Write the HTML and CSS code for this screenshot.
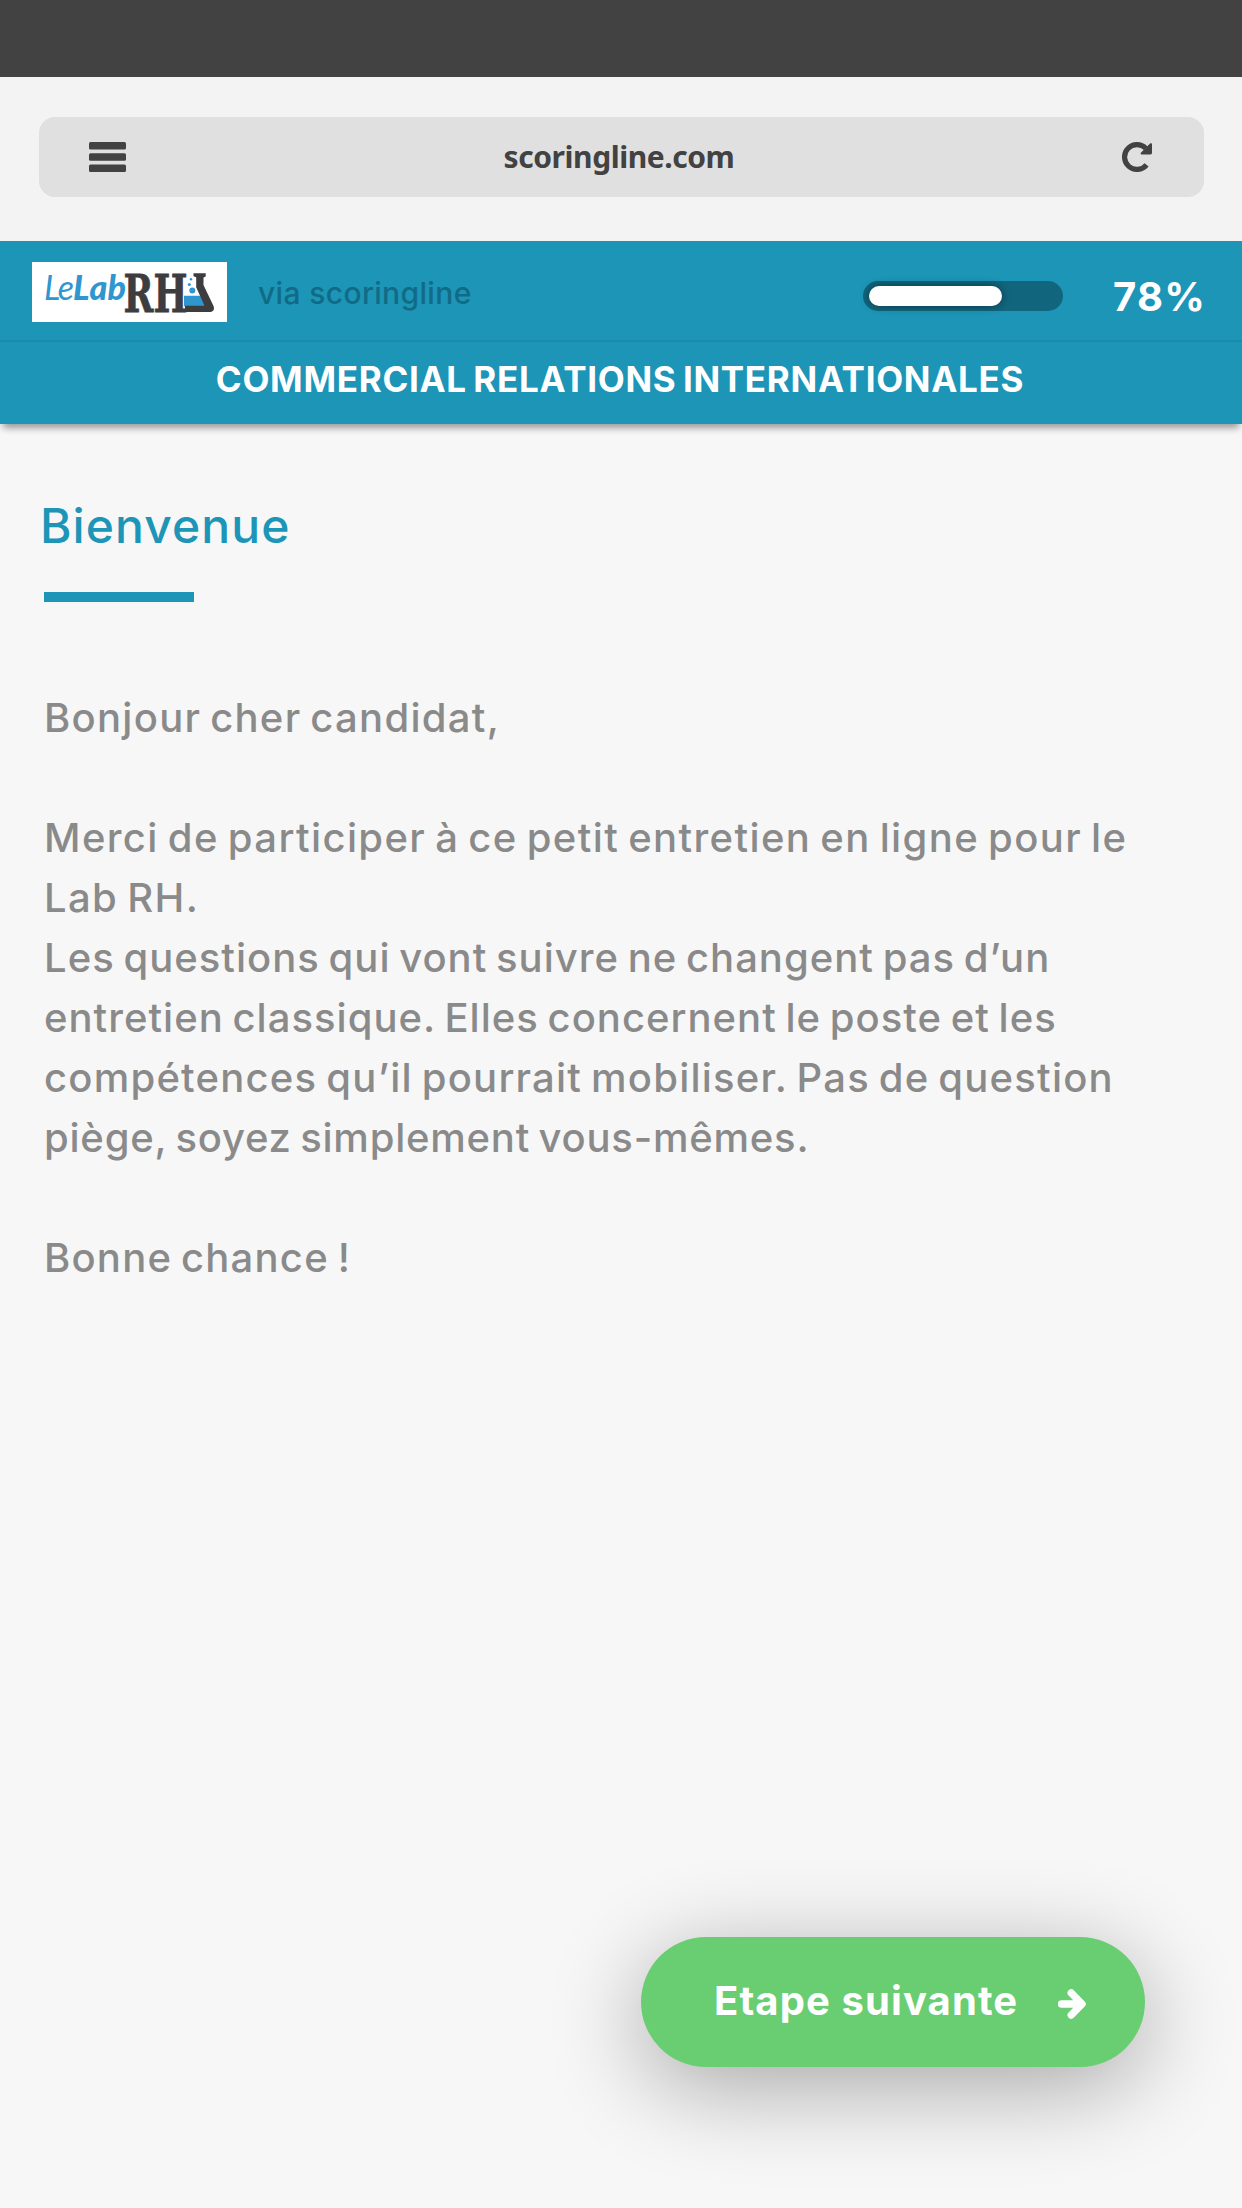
FILE: index.html
```html
<!DOCTYPE html>
<html lang="fr">
<head>
  <meta charset="UTF-8">
  <meta name="viewport" content="width=device-width, initial-scale=1.0">
  <title>Commercial Relations Internationales - scoringline</title>
  <link rel="stylesheet" href="styles.css">
</head>
<body>
  <div class="status-bar"></div>

  <!-- Browser bar -->
  <div class="browser-bar">
    <div class="url-box">
      <svg class="menu-icon" width="37" height="30" viewBox="0 0 37 30">
        <rect width="37" height="7.6" rx="1.5"/>
        <rect y="11.2" width="37" height="7.6" rx="1.5"/>
        <rect y="22.4" width="37" height="7.6" rx="1.5"/>
      </svg>
      <span class="url">scoringline.com</span>
      <svg class="reload-icon" width="30" height="30" viewBox="0 0 30 30">
        <path class="ring" d="M24.6 22.8A12.4 12.4 0 1 1 23.8 6.3"/>
        <path d="M30 2v9a1.4 1.4 0 0 1-1.4 1.4h-9c-1 0-1.3-1-.7-1.7l8.9-8.9c.8-.8 2.2-.5 2.2.2z"/>
      </svg>
    </div>
  </div>

  <!-- Header -->
  <header>
    <div class="header-top">
      <svg class="logo" width="195" height="60" viewBox="0 0 195 60">
        <rect width="195" height="60" fill="#fff"/>
        <!-- flask -->
        <path fill="#3096d0" d="M152 33.7h16.5l5 10.5H152z"/>
        <path fill="#3d3d3f" d="M161.500 11.300h12.200v3.200l-2.200 1v7.500l10 21c1.400 3.400-.3 6-3.800 6H153v-6.200h19.500l-8.300-18.600v-10l-2.700-1z"/>
        <circle fill="#3096d0" cx="160.300" cy="28.600" r="3"/>
        <circle fill="#3096d0" cx="157.300" cy="22.500" r="1.500"/>
        <circle fill="#3096d0" cx="159" cy="17.300" r="1.200"/>
        <text class="logo-le" x="12" y="38" textLength="30">Le</text>
        <text class="logo-lab" x="41" y="38" textLength="53">Lab</text>
        <text class="logo-rh" x="91.600" y="50" textLength="64" lengthAdjust="spacingAndGlyphs">RH</text>
      </svg>
      <span class="via">via scoringline</span>
      <div class="progress">
        <div class="progress-track">
          <div class="progress-fill"></div>
        </div>
        <span class="percent">78%</span>
      </div>
    </div>
    <div class="job-title">COMMERCIAL RELATIONS INTERNATIONALES</div>
  </header>

  <main>
    <h1>Bienvenue</h1>
    <div class="rule"></div>
    <div class="message">
      <p class="greeting">Bonjour cher candidat,</p>
      <p>
        <span class="wide">Merci de participer à ce petit entretien en ligne pour le</span><br>
        <span class="wide">Lab RH.</span><br>
        <span>Les questions qui vont suivre ne changent pas d’un</span><br>
        <span>entretien classique. Elles concernent le poste et les</span><br>
        <span class="medium">compétences qu’il pourrait mobiliser. Pas de question</span><br>
        <span class="tight">piège, soyez simplement vous-mêmes.</span>
      </p>
      <p class="medium">Bonne chance !</p>
    </div>
  </main>

  <button class="next-button" type="button">
    <span>Etape suivante</span>
    <svg width="28" height="30" viewBox="0 0 28 30">
      <path d="M3.5 15H22M13.3 4L24 15 13.3 26"/>
    </svg>
  </button>
</body>
</html>
```

FILE: styles.css
```css
* {
  box-sizing: border-box;
}

body {
  display: flex;
  flex-direction: column;
  height: 2208px;
  margin: 0;
  background-color: #f7f7f7;
  color: #8a8a8a;
  font-family: Inter, "Liberation Sans", sans-serif;
}

/* Browser bar */
.status-bar {
  height: 77px;
  background-color: #424242;
}

.browser-bar {
  height: 164px;
  padding: 40px 38px 0 39px;
  background-color: #f3f3f3;
}

.url-box {
  display: flex;
  justify-content: space-between;
  align-items: center;
  height: 80px;
  padding: 0 52px 0 50px;
  background-color: #e0e0e0;
  border-radius: 16px;
  color: #424242;
}

.url-box svg {
  fill: #424242;
}

.reload-icon .ring {
  fill: none;
  stroke: #424242;
  stroke-width: 5.2;
}

.url {
  font-family: "Noto Sans", sans-serif;
  font-size: 30px;
  font-weight: 700;
  line-height: 40px;
  letter-spacing: -0.44px;
  margin-left: -10px;
}

/* Header */
header {
  height: 183px;
  background-color: #1d95b7;
  box-shadow: 0 7px 7px -3px rgba(0, 0, 0, 0.38);
}

.header-top {
  display: flex;
  align-items: center;
  height: 101px;
  padding: 3px 38px 0 32px;
  border-bottom: 2px solid #1b89aa;
}

.logo {
  overflow: visible;
}

.logo-le,
.logo-lab {
  font-family: Lato, sans-serif;
  font-size: 34px;
  font-style: italic;
  fill: #3096d0;
}

.logo-lab {
  font-weight: 900;
}

.logo-rh {
  font-family: "DejaVu Serif", serif;
  font-size: 53px;
  font-weight: 700;
  fill: #3d3d3f;
  stroke: #3d3d3f;
  stroke-width: 0.8;
}

.via {
  margin: 1px 0 0 31px;
  color: #116b86;
  font-size: 30px;
  font-weight: 500;
  letter-spacing: 0.35px;
}

.progress {
  display: flex;
  align-items: center;
  margin: 7px 0 0 auto;
}

.progress-track {
  width: 200px;
  height: 30px;
  padding: 5px 6px;
  background-color: #11667e;
  border-radius: 15px;
}

.progress-fill {
  width: 133px;
  height: 20px;
  background-color: #fff;
  border-radius: 10px;
  box-shadow: 0 0 10px rgba(0, 0, 0, 0.45);
}

.percent {
  width: 91px;
  margin: 2px 0 0 50px;
  color: #fff;
  font-size: 40px;
  font-weight: 700;
  line-height: 40px;
  letter-spacing: 1.2px;
}

.job-title {
  color: #fff;
  font-size: 35px;
  font-weight: 700;
  line-height: 74px;
  letter-spacing: 0.7px;
  word-spacing: -2.5px;
  text-align: center;
  text-indent: -2px;
  white-space: nowrap;
}

/* Content */
main {
  flex: 1;
  padding: 72px 44px 0;
}

h1 {
  margin: 0 0 36px -4px;
  color: #1d95b7;
  font-size: 48px;
  font-weight: 500;
  line-height: 60px;
  letter-spacing: 1.08px;
}

.rule {
  width: 150px;
  height: 10px;
  background-color: #1d95b7;
}

.message {
  margin-top: 86px;
  font-size: 40px;
  font-weight: 500;
  line-height: 60px;
  letter-spacing: 1.02px;
  word-spacing: -3px;
  white-space: nowrap;
}

.message p {
  margin: 0 0 60px;
}

.message .greeting {
  letter-spacing: 1.28px;
}

.message .wide {
  letter-spacing: 1.38px;
}

.message .medium {
  letter-spacing: 1.22px;
}

.message .tight {
  letter-spacing: 0.78px;
}

/* Next step */
.next-button {
  display: flex;
  align-items: center;
  align-self: flex-end;
  width: 504px;
  height: 130px;
  margin: 0 97px 141px 0;
  padding: 0 59px 0 73px;
  background-color: #69cd72;
  border: none;
  border-radius: 65px;
  box-shadow: 0 20px 95px rgba(0, 0, 0, 0.33);
  color: #fff;
  font-family: inherit;
  font-size: 40px;
  font-weight: 700;
  letter-spacing: 1.1px;
  white-space: nowrap;
}

.next-button span {
  margin-bottom: 3px;
}

.next-button svg {
  flex-shrink: 0;
  margin: 3px 0 0 auto;
  fill: none;
  stroke: #fff;
  stroke-width: 7.5;
  stroke-linecap: round;
  stroke-linejoin: round;
}
```
